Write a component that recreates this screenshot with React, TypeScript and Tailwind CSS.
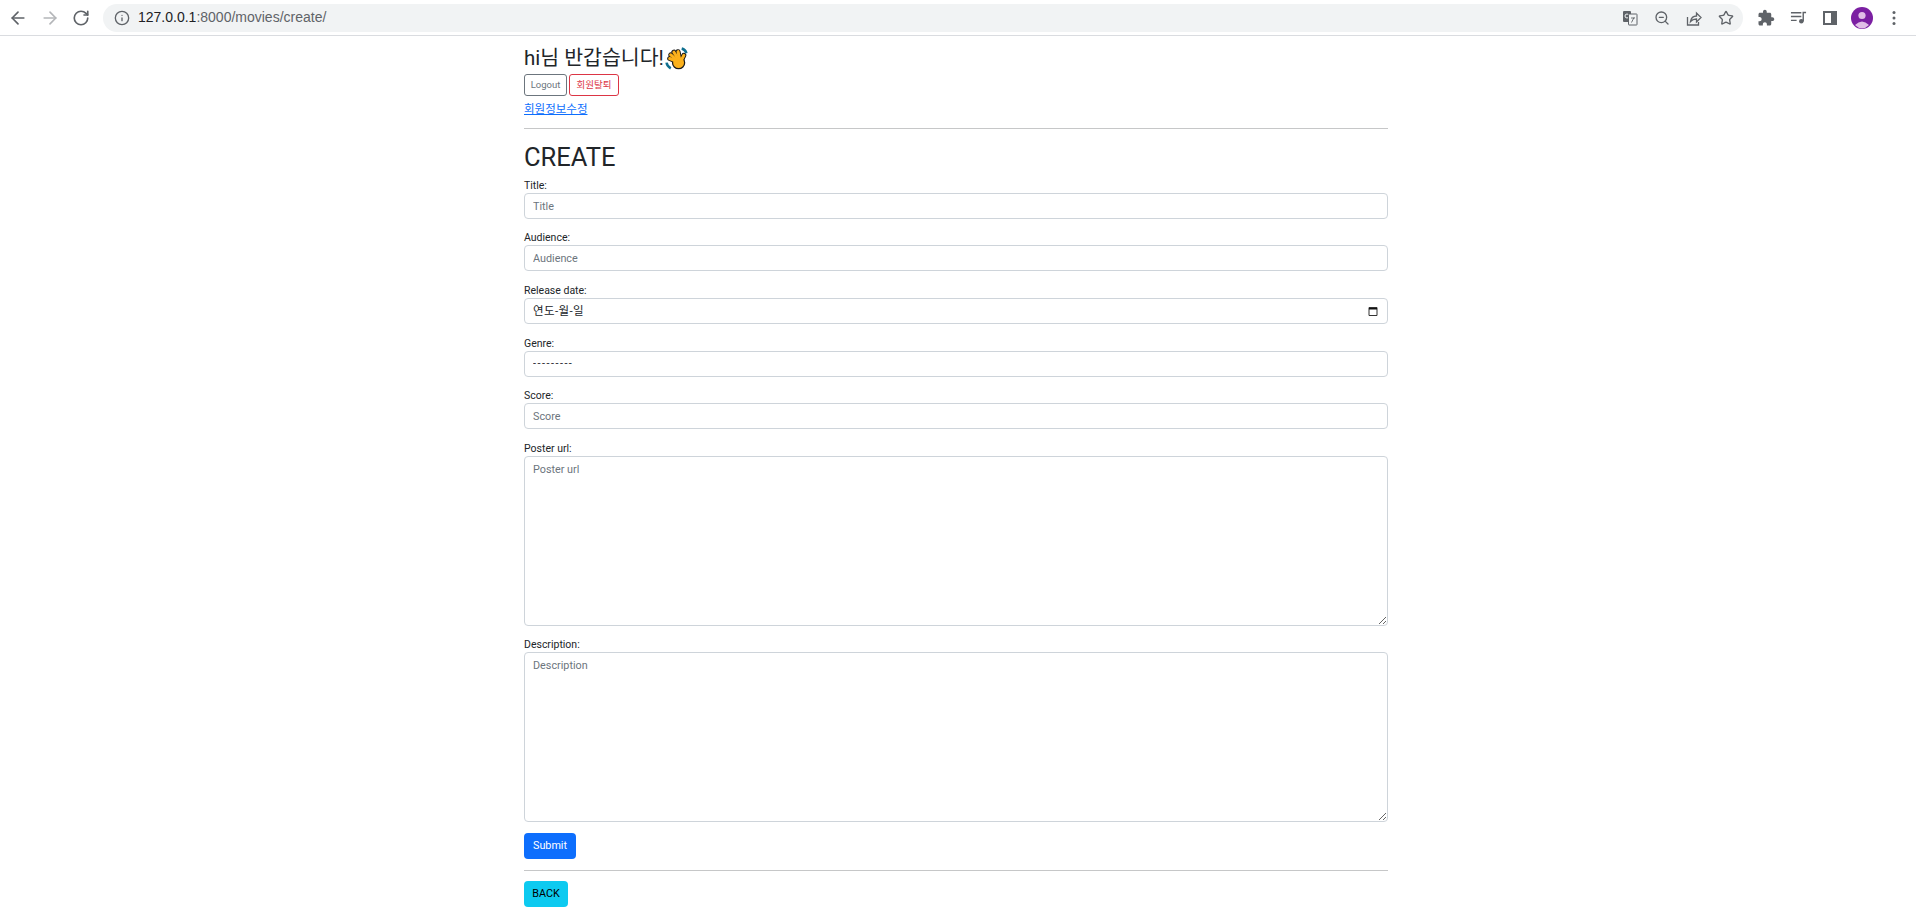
import React from 'react';
import { ArrowLeft, ArrowRight, RotateCw, Info, ZoomOut, Star } from 'lucide-react';

const fontStack = "font-['Roboto','Noto_Sans_CJK_KR',sans-serif]";

const fieldClass =
  'block w-full h-[26px] rounded-[4px] border border-[#ced4da] bg-white px-[8px] text-[10.8px] text-[#212529] placeholder:text-[#6c757d] outline-none';
const areaClass =
  'block w-full h-[170px] rounded-[4px] border border-[#ced4da] bg-white px-[8px] pt-[5px] text-[10.8px] text-[#212529] placeholder:text-[#6c757d] outline-none resize-y';

const Field: React.FC<{ label: string; children: React.ReactNode; className?: string }> = ({ label, children, className }) => (
  <div className={className}>
    <label className="block h-[15px] text-[10.5px] leading-[17px] text-[#212529]">{label}</label>
    <div className="mt-[1px]">{children}</div>
  </div>
);

const WaveEmoji = () => (
  <svg viewBox="0 0 22 22" className="w-[23px] h-[23px] ml-[1px] mt-[1px]">
    <path d="M1.500 15 Q2 18.500 5.500 20.500" fill="none" stroke="#0f6f8f" strokeWidth="2.400" />
    <path d="M16 1.500 Q19.500 2.500 20.500 6" fill="none" stroke="#0f6f8f" strokeWidth="2.400" />
    <g fill="none" stroke="#1a1a1a" strokeWidth="4.800" strokeLinecap="round">
      <path d="M12 14 L4.500 11" />
      <path d="M12 13 L5.500 7.500" />
      <path d="M13 12 L8.500 5" />
      <path d="M14 12 L12.500 4.500" />
      <path d="M15 14 L18 8" />
    </g>
    <circle cx="13" cy="15" r="5.800" fill="#fbb11c" stroke="#1a1a1a" strokeWidth="1.200" />
    <g fill="none" stroke="#fbb11c" strokeWidth="3" strokeLinecap="round">
      <path d="M12 14 L4.500 11" />
      <path d="M12 13 L5.500 7.500" />
      <path d="M13 12 L8.500 5" />
      <path d="M14 12 L12.500 4.500" />
      <path d="M15 14 L18 8" />
    </g>
  </svg>
);

const BrowserBar = () => (
  <div className="flex h-[36px] items-center border-b border-[#dadce0] bg-white text-[#5f6368]">
    <ArrowLeft className="ml-[8px] w-[20px] h-[20px]" strokeWidth={2} />
    <ArrowRight className="ml-[12px] w-[20px] h-[20px] text-[#b4b6b9]" strokeWidth={2} />
    <RotateCw className="ml-[12px] w-[18px] h-[18px]" strokeWidth={2.2} />
    <div className="ml-[13px] flex h-[28px] w-[1640px] items-center rounded-full bg-[#f1f3f4] pl-[11px] pr-[9px]">
      <Info className="w-[16px] h-[16px]" strokeWidth={2} />
      <span className="ml-[8px] text-[14px] font-['Liberation_Sans',sans-serif] text-[#5f6368]">
        <span className="text-[#202124]">127.0.0.1</span>:8000/movies/create/
      </span>
      <div className="ml-auto flex items-center gap-[16px]">
        <svg viewBox="0 0 16 16" className="w-[16px] h-[16px]">
          <rect x="1" y="1" width="8" height="11" rx="1" fill="#5f6368" />
          <circle cx="5" cy="6" r="2" fill="none" stroke="#f1f3f4" strokeWidth="1" />
          <rect x="6.500" y="4" width="8.500" height="11" rx="0.500" fill="#f1f3f4" stroke="#5f6368" />
          <path d="M9 8h4M12 7.500 L9.500 12.500" stroke="#5f6368" strokeWidth="0.900" fill="none" />
        </svg>
        <ZoomOut className="w-[16px] h-[16px]" strokeWidth={2} />
        <svg viewBox="0 0 16 16" className="w-[16px] h-[16px]" fill="none" stroke="#5f6368" strokeWidth="1.300">
          <path d="M1.500 7v8h11v-3" />
          <path d="M4.500 11.500c.6-3.500 3-5.500 6-5.500V3l4.500 4.500L10.500 12V9c-2.500 0-4.500.8-6 2.500z" />
        </svg>
        <Star className="w-[16px] h-[16px]" strokeWidth={2} />
      </div>
    </div>
    <svg viewBox="0 0 24 24" className="ml-[14px] w-[18px] h-[18px] fill-[#5f6368]">
      <path d="M20.500 11H19V7c0-1.100-.9-2-2-2h-4V3.500C13 2.120 11.880 1 10.500 1S8 2.120 8 3.500V5H4c-1.100 0-1.990.9-1.990 2v3.800H3.500c1.490 0 2.700 1.210 2.700 2.700s-1.210 2.700-2.700 2.700H2V20c0 1.100.9 2 2 2h3.800v-1.500c0-1.490 1.210-2.700 2.700-2.700 1.490 0 2.700 1.210 2.700 2.700V22H17c1.100 0 2-.9 2-2v-4h1.500c1.380 0 2.500-1.120 2.500-2.500S21.880 11 20.500 11z" />
    </svg>
    <svg viewBox="0 0 18 18" className="ml-[15px] w-[17px] h-[17px]">
      <path d="M1 4h11M1 8h11M1 12h6" stroke="#5f6368" strokeWidth="1.500" />
      <path d="M14 3v10M14 3.700h3" stroke="#5f6368" strokeWidth="1.500" />
      <circle cx="12" cy="13" r="2.400" fill="#5f6368" />
    </svg>
    <svg viewBox="0 0 14 14" className="ml-[16px] w-[14px] h-[14px]">
      <path d="M0 0h14v14H0z" fill="#5f6368" />
      <path d="M2 2h6v10H2z" fill="#fff" />
    </svg>
    <svg viewBox="0 0 22 22" className="ml-[14px] w-[22px] h-[22px]">
      <circle cx="11" cy="11" r="11" fill="#7b1fa2" />
      <circle cx="11" cy="8.500" r="3.600" fill="#e1bee7" />
      <path d="M4 18 Q11 11 18 18 Q11 25 4 18Z" fill="#e1bee7" />
    </svg>
    <svg viewBox="0 0 4 16" className="ml-[19px] w-[4px] h-[16px]">
      <circle cx="2" cy="2.500" r="1.500" fill="#5f6368" />
      <circle cx="2" cy="8" r="1.500" fill="#5f6368" />
      <circle cx="2" cy="13.500" r="1.500" fill="#5f6368" />
    </svg>
  </div>
);

export default function App() {
  return (
    <div className={`h-[919px] overflow-hidden bg-white ${fontStack}`}>
      <BrowserBar />
      <div className="mx-auto mt-[11px] w-[864px] -translate-x-[2px]">
        <div className="flex h-[22px] items-center text-[20.5px] leading-[22px] text-[#212529]">
          hi님 반갑습니다!
          <WaveEmoji />
        </div>
        <div className="mt-[5px] flex gap-[2px]">
          <button className="h-[22px] w-[43px] rounded-[3px] border border-[#6c757d] text-[9.5px] text-[#6c757d]">Logout</button>
          <button className="h-[22px] w-[50px] rounded-[3px] border border-[#dc3545] text-[9.5px] text-[#dc3545]">회원탈퇴</button>
        </div>
        <a className="mt-[6px] block text-[11.5px] leading-[15px] text-[#0d6efd] underline">회원정보수정</a>
        <hr className="mt-[11px] border-t border-[#c6c7c8]" />
        <h1 className="mt-[12px] h-[32px] text-[25.5px] leading-[33px] text-[#212529]">CREATE</h1>
        <Field label="Title:" className="mt-[4px]">
          <input className={fieldClass} placeholder="Title" />
        </Field>
        <Field label="Audience:" className="mt-[10px]">
          <input className={fieldClass} placeholder="Audience" />
        </Field>
        <Field label="Release date:" className="mt-[11px]">
          <div className={`${fieldClass} flex items-center justify-between`}>
            <span className="pt-[1px] text-[11.5px] text-[#212529] tracking-[0.4px]">연도-월-일</span>
            <svg viewBox="0 0 10 10" className="w-[10px] h-[10px] mr-[1px]">
              <path d="M1 1.500h8v8H1z" fill="none" stroke="#333" strokeWidth="1" />
              <path d="M1 2h8v1.500H1z" fill="#111" />
            </svg>
          </div>
        </Field>
        <Field label="Genre:" className="mt-[11px]">
          <select className={`${fieldClass} appearance-none tracking-[1.5px]`}>
            <option>---------</option>
          </select>
        </Field>
        <Field label="Score:" className="mt-[10px]">
          <input className={fieldClass} placeholder="Score" />
        </Field>
        <Field label="Poster url:" className="mt-[11px]">
          <textarea className={areaClass} placeholder="Poster url" />
        </Field>
        <Field label="Description:" className="mt-[10px]">
          <textarea className={areaClass} placeholder="Description" />
        </Field>
        <button className="mt-[11px] block h-[26px] w-[52px] rounded-[4px] bg-[#0d6efd] text-[10.8px] text-white">Submit</button>
        <hr className="mt-[11px] border-t border-[#c6c7c8]" />
        <button className="mt-[10px] block h-[26px] w-[44px] rounded-[4px] bg-[#0dcaf0] text-[10.8px] text-black">BACK</button>
      </div>
    </div>
  );
}
